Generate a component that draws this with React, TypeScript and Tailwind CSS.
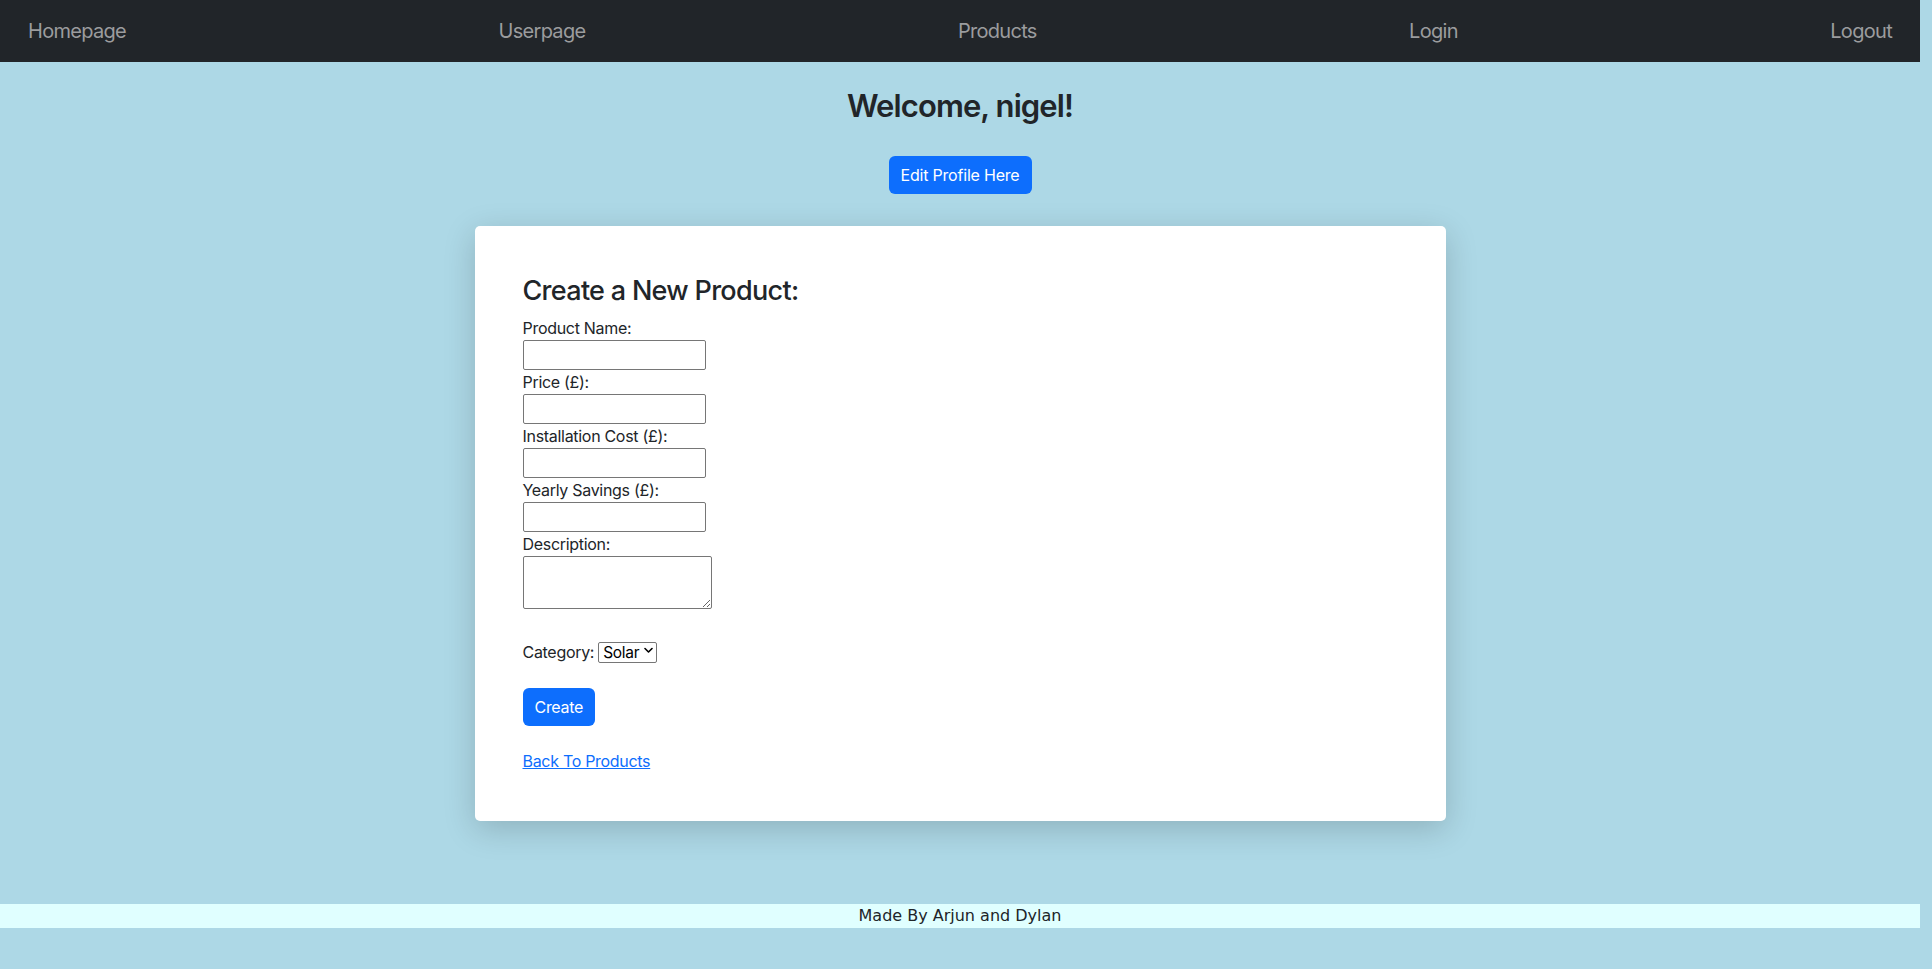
import { useState } from 'react';

const navLinks = ['Homepage', 'Userpage', 'Products', 'Login', 'Logout'];

const fields = ['Product Name:', 'Price (£):', 'Installation Cost (£):', 'Yearly Savings (£):'];

export default function App() {
  const [category, setCategory] = useState('Solar');

  return (
    <div className="min-h-[969px] bg-[#add8e6] font-['Inter',sans-serif] text-[#212529]">
      <div className="w-[1920px]">
        {/* Navbar */}
        <nav className="h-[62px] bg-[#212529] px-7 flex items-center justify-between">
          {navLinks.map((link) => (
            <a key={link} href="#" className="text-[20px] leading-[30px] tracking-[-0.7px] text-[#9b9c9e] hover:text-white">
              {link}
            </a>
          ))}
        </nav>

        {/* Header */}
        <div className="flex flex-col items-center">
          <h2 className="mt-[25px] text-[31px] leading-[38px] font-semibold tracking-[-0.9px]">Welcome, nigel!</h2>
          <button className="mt-[31px] h-[38px] px-3 rounded-[6px] bg-[#0d6efd] text-white text-[16px] leading-6 tracking-[-0.2px]">
            Edit Profile Here
          </button>
        </div>

        {/* Card */}
        <div className="mx-auto mt-[32px] w-[971px] bg-white rounded-[5px] shadow-[0_8px_32px_rgba(0,0,0,0.18)] p-12">
          <h3 className="text-[27px] leading-[34px] font-medium tracking-[-0.7px] mb-[8px]">Create a New Product:</h3>
          <form className="flex flex-col items-start text-[16px] leading-6 tracking-[-0.3px]">
            {fields.map((label) => (
              <label key={label} className="flex flex-col items-start">
                <span>{label}</span>
                <input
                  type="text"
                  className="w-[183px] h-[30px] border border-[#767676] rounded-[2px] px-1 bg-white"
                />
              </label>
            ))}
            <label className="flex flex-col items-start">
              <span>Description:</span>
              <textarea className="w-[189px] h-[53px] border border-[#767676] rounded-[2px] px-1 bg-white" />
            </label>

            <div className="mt-[31px] flex items-center h-6">
              <span>Category:</span>
              <div className="relative ml-[4px]">
                <select
                  value={category}
                  onChange={(e) => setCategory(e.target.value)}
                  className="appearance-none w-[59px] h-[21px] border border-[#767676] rounded-[2px] bg-white pl-[4px] pr-[12px] text-[15.5px] leading-[19px] tracking-[-0.3px] text-black"
                >
                  <option>Solar</option>
                  <option>Wind</option>
                  <option>Heat Pump</option>
                </select>
                <svg
                  className="pointer-events-none absolute right-[4px] top-[7px] w-[9px] h-[7px]"
                  viewBox="0 0 9 7"
                  fill="none"
                >
                  <path d="M1 1.5 4.5 5 8 1.5" stroke="#000" strokeWidth="1.6" strokeLinecap="round" strokeLinejoin="round" />
                </svg>
              </div>
            </div>

            <button
              type="button"
              className="mt-[24px] h-[38px] px-3 rounded-[6px] bg-[#0d6efd] text-white text-[16px] leading-6"
            >
              Create
            </button>

            <a href="#" className="mt-[23px] text-[#0d6efd] underline">
              Back To Products
            </a>
          </form>
        </div>

        {/* Footer */}
        <footer className="mt-[83px] h-6 bg-[#e0ffff] flex items-center justify-center font-['DejaVu_Sans',sans-serif] text-[16px] text-[#212529]">
          Made By Arjun and Dylan
        </footer>
      </div>
    </div>
  );
}
